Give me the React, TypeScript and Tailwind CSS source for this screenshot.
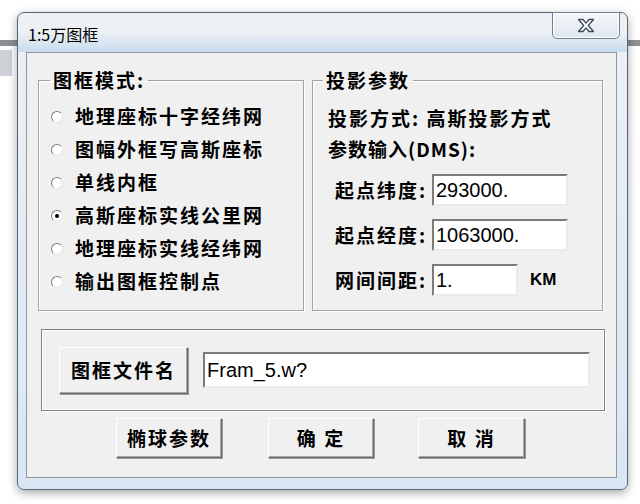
import React from 'react';

const cjk = "font-['Noto_Sans_CJK_SC','Noto_Sans',sans-serif]";
const latin = "font-['Liberation_Sans','DejaVu_Sans',sans-serif]";

const Radio = ({ checked }: { checked?: boolean }) => (
  <span className="flex h-[12px] w-[12px] shrink-0 items-center justify-center rounded-full border border-[#7e7e7e] border-r-[#e4e4e4] border-b-[#e4e4e4] bg-white">
    {checked && <span className="h-[4px] w-[4px] rounded-full bg-black" />}
  </span>
);

const Field = ({ value, className }: { value: string; className: string }) => (
  <div
    className={`${className} flex items-center border-2 border-t-[#7b7b7b] border-l-[#7b7b7b] border-r-[#ebebeb] border-b-[#ebebeb] bg-white pl-[2px] ${latin} text-[20px] text-black`}
  >
    {value}
  </div>
);

const Button = ({ children, className }: { children: React.ReactNode; className: string }) => (
  <button
    className={`${className} flex items-center justify-center border border-t-white border-l-white border-r-[#6a6a6a] border-b-[#6a6a6a] bg-[#f0f0f0] shadow-[1px_1px_0_#9a9a9a,inset_-1px_-1px_0_#a8a8a8] ${cjk} text-[19px] font-bold tracking-[2px] text-black`}
  >
    {children}
  </button>
);

const modes = [
  '地理座标十字经纬网',
  '图幅外框写高斯座标',
  '单线内框',
  '高斯座标实线公里网',
  '地理座标实线经纬网',
  '输出图框控制点',
];

const CloseGlyph = () => (
  <svg width="18" height="15" viewBox="0 0 18 15">
    <path
      d="M1.5 1.5h4.5l3 3.6 3-3.6h4.5l-5.2 6 5.2 6h-4.5l-3-3.6-3 3.6H1.5l5.2-6z"
      fill="#fff"
      stroke="#3d4a58"
      strokeWidth="1.3"
      strokeLinejoin="round"
    />
  </svg>
);

export default function App() {
  return (
    <div className="relative h-[504px] w-[640px] overflow-hidden bg-white pl-[17px] pt-[12px]">
      {/* bits of the window behind */}
      <div className="absolute left-0 top-[40px] h-[6px] w-[640px] bg-[#8c8f93]" />
      <div className="absolute left-0 top-[50px] h-[26px] w-[12px] bg-[#cdd2d8]" />

      <div className="relative flex h-[478px] w-[611px] flex-col rounded-[7px] border border-[#5b6673] bg-gradient-to-b from-[#eef1f4] via-[#e2ebf4] to-[#d9e7f4] shadow-[0_3px_10px_rgba(0,0,0,0.35)]">
        <div className="flex h-[39px] items-center bg-gradient-to-b from-transparent via-transparent to-[#c8dcef] pl-[10px] pt-[2px]">
          <span className={`${cjk} text-[16px] text-black`}>1:5万图框</span>
        </div>
        <button className="absolute right-[7px] top-[-1px] flex h-[27px] w-[68px] items-center justify-center rounded-b-[5px] border border-[#6f7d8c] bg-gradient-to-b from-[#f4f7fa] to-[#dfe7ef] shadow-[inset_0_0_0_1px_#fff]">
          <CloseGlyph />
        </button>

        <div className="ml-[8px] flex h-[426px] w-[591px] flex-col border border-[#8e98a3] bg-[#f0f0f0] pl-[11px] pt-[17px]">
          <div className="flex h-[241px] gap-[8px]">
            <fieldset className="m-0 h-[241px] w-[266px] min-w-0 border border-[#a2a2a2] p-0 shadow-[inset_1px_1px_0_#fff,1px_1px_0_#fff]">
              <legend className={`ml-[11px] px-[3px] ${cjk} text-[19px] font-bold leading-[20px] tracking-[2px] text-black`}>
                图框模式:
              </legend>
              <div className="mt-[10px] flex flex-col">
                {modes.map((m, i) => (
                  <div key={m} className="flex h-[33px] items-center gap-[12px] pl-[12px]">
                    <Radio checked={i === 3} />
                    <span className={`${cjk} text-[19px] font-bold tracking-[2px] text-black`}>{m}</span>
                  </div>
                ))}
              </div>
            </fieldset>

            <fieldset className="m-0 h-[241px] w-[291px] min-w-0 border border-[#a2a2a2] p-0 shadow-[inset_1px_1px_0_#fff,1px_1px_0_#fff]">
              <legend className={`ml-[10px] px-[3px] ${cjk} text-[19px] font-bold leading-[20px] tracking-[2px] text-black`}>
                投影参数
              </legend>
              <div className={`mt-[13px] flex flex-col ${cjk} text-[19px] font-bold text-black`}>
                <div className="flex h-[30px] items-center pl-[15px] tracking-[2px]">投影方式: 高斯投影方式</div>
                <div className="flex h-[32px] items-center pl-[15px] tracking-[1px]">参数输入(DMS):</div>
                <div className="mt-[9px] flex items-center pl-[22px]">
                  <span className="w-[97px] tracking-[2px]">起点纬度:</span>
                  <Field value="293000." className="h-[32px] w-[136px] font-normal" />
                </div>
                <div className="mt-[13px] flex items-center pl-[22px]">
                  <span className="w-[97px] tracking-[2px]">起点经度:</span>
                  <Field value="1063000." className="h-[32px] w-[136px] font-normal" />
                </div>
                <div className="mt-[13px] flex items-center pl-[22px]">
                  <span className="w-[97px] tracking-[2px]">网间间距:</span>
                  <Field value="1." className="h-[32px] w-[86px] font-normal" />
                  <span className={`ml-[12px] ${latin} text-[17px] font-bold`}>KM</span>
                </div>
              </div>
            </fieldset>
          </div>

          <div className="ml-[3px] mt-[18px] flex h-[82px] w-[564px] items-center gap-[15px] border border-[#7f7f7f] pl-[17px] shadow-[inset_1px_1px_0_#fff,inset_-1px_-1px_0_#fff,1px_1px_0_#fff]">
            <Button className="h-[47px] w-[129px]">图框文件名</Button>
            <Field value="Fram_5.w?" className="h-[36px] w-[387px]" />
          </div>

          <div className="ml-[78px] mt-[7px] flex gap-[46px]">
            <Button className="h-[40px] w-[106px] tracking-[0px]">椭球参数</Button>
            <Button className="h-[40px] w-[106px]">确 定</Button>
            <Button className="-ml-[2px] h-[40px] w-[107px]">取 消</Button>
          </div>
        </div>
      </div>
    </div>
  );
}
